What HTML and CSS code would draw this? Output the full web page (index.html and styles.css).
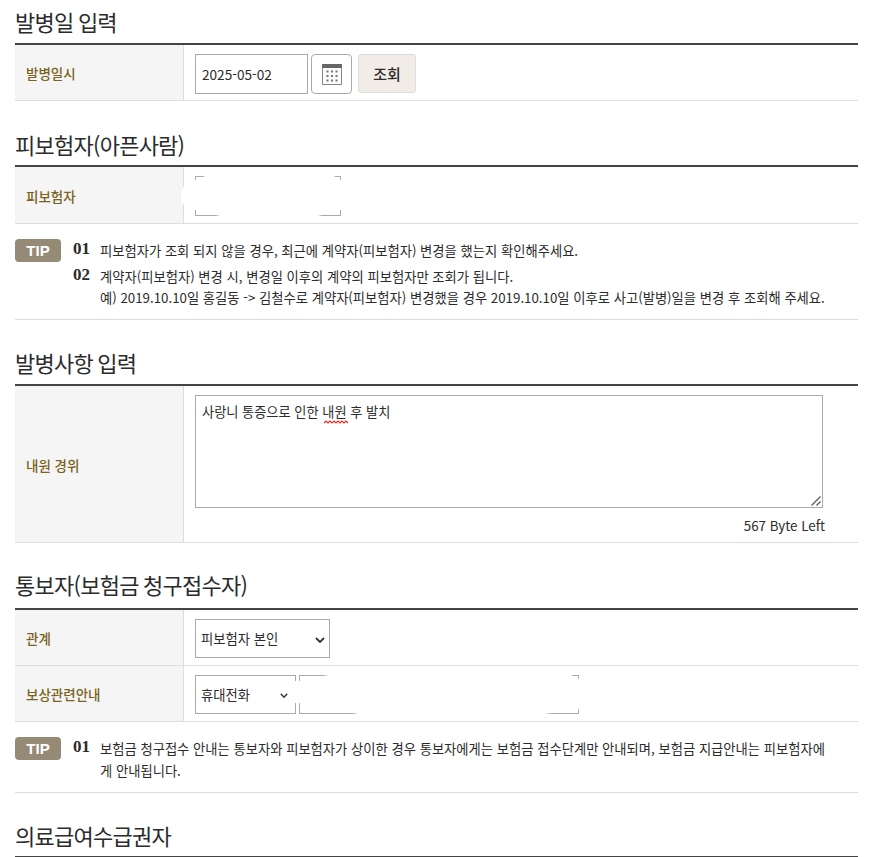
FILE: index.html
```html
<!DOCTYPE html>
<html lang="ko">
<head>
<meta charset="utf-8">
<title>발병일 입력</title>
<link rel="stylesheet" href="styles.css">
</head>
<body>
<main class="page">
  <section class="block">
    <h2 class="title title-a">발병일 입력</h2>
    <div class="table">
      <div class="row row-date">
        <div class="label">발병일시</div>
        <div class="cell cell-top">
          <input class="field field-date" type="text" value="2025-05-02">
          <button class="cal" type="button" aria-label="달력">
            <svg width="20" height="21" viewBox="0 0 20 21">
              <rect x="0.5" y="0.5" width="19" height="20" fill="#fbfbfb" stroke="#888" stroke-width="1"/>
              <rect x="0" y="0" width="20" height="4" fill="#666"/>
              <g fill="#777">
                <rect x="4.5" y="6.5" width="2" height="2"/><rect x="9" y="6.5" width="2" height="2"/><rect x="13.5" y="6.5" width="2" height="2"/>
                <rect x="4.5" y="11" width="2" height="2"/><rect x="9" y="11" width="2" height="2"/><rect x="13.5" y="11" width="2" height="2"/>
                <rect x="4.5" y="15.5" width="2" height="2"/><rect x="9" y="15.5" width="2" height="2"/><rect x="13.5" y="15.5" width="2" height="2"/>
              </g>
            </svg>
          </button>
          <button class="search" type="button">조회</button>
        </div>
      </div>
    </div>
  </section>

  <section class="block">
    <h2 class="title title-b">피보험자(아픈사람)</h2>
    <div class="table">
      <div class="row row-insured">
        <div class="label">피보험자</div>
        <div class="cell cell-top">
          <span class="redact-wrap">
            <input class="field field-name" type="text">
            <span class="mask mask-name"></span>
          </span>
        </div>
      </div>
    </div>
    <div class="tip tip-first">
      <span class="badge">TIP</span>
      <ol class="tips">
        <li><b class="num">01</b><p>피보험자가 조회 되지 않을 경우, 최근에 계약자(피보험자) 변경을 했는지 확인해주세요.</p></li>
        <li><b class="num">02</b><p>계약자(피보험자) 변경 시, 변경일 이후의 계약의 피보험자만 조회가 됩니다.<br>예) 2019.10.10일 홍길동 -&gt; 김철수로 계약자(피보험자) 변경했을 경우 2019.10.10일 이후로 사고(발병)일을 변경 후 조회해 주세요.</p></li>
      </ol>
    </div>
  </section>

  <section class="block">
    <h2 class="title">발병사항 입력</h2>
    <div class="table">
      <div class="row row-text">
        <div class="label">내원 경위</div>
        <div class="cell cell-col">
          <span class="text-wrap">
            <textarea class="area" spellcheck="false">사랑니 통증으로 인한 내원 후 발치</textarea>
            <svg class="squiggle" width="24" height="4" viewBox="0 0 24 4"><path d="M0 3 L2 1 L4 3 L6 1 L8 3 L10 1 L12 3 L14 1 L16 3 L18 1 L20 3 L22 1 L24 3" fill="none" stroke="#e8261f" stroke-width="1.2"/></svg>
            <svg class="grip" width="10" height="10" viewBox="0 0 10 10"><path d="M0.5 9.5L9.5 0.5M5.5 9.5L9.5 5.5" fill="none" stroke="#555" stroke-width="1.2"/></svg>
          </span>
          <span class="bytes">567 Byte Left</span>
        </div>
      </div>
    </div>
  </section>

  <section class="block">
    <h2 class="title title-d">통보자(보험금 청구접수자)</h2>
    <div class="table">
      <div class="row row-rel">
        <div class="label">관계</div>
        <div class="cell cell-top">
          <select class="sel sel-rel"><option>피보험자 본인</option></select>
        </div>
      </div>
      <div class="row row-rel">
        <div class="label">보상관련안내</div>
        <div class="cell cell-top cell-phone">
          <select class="sel sel-phone"><option>휴대전화</option></select>
          <span class="redact-wrap">
            <input class="field field-phone" type="text">
            <span class="mask mask-phone"></span>
          </span>
        </div>
      </div>
    </div>
    <div class="tip tip-second">
      <span class="badge">TIP</span>
      <ol class="tips">
        <li><b class="num">01</b><p>보험금 청구접수 안내는 통보자와 피보험자가 상이한 경우 통보자에게는 보험금 접수단계만 안내되며, 보험금 지급안내는 피보험자에게 안내됩니다.</p></li>
      </ol>
    </div>
  </section>

  <section class="block">
    <h2 class="title title-e">의료급여수급권자</h2>
    <div class="table table-last"></div>
  </section>
</main>
</body>
</html>
```
FILE: styles.css
```css
* { box-sizing: border-box; }
html, body { margin: 0; padding: 0; background: #fff; }
body {
  font-family: "Noto Sans CJK KR", "Noto Sans", sans-serif;
  color: #2b2b2b;
  height: 857px;
  overflow: hidden;
}
.page { width: 843px; margin-left: 15px; }
.title {
  margin: 0;
  height: 64px;
  padding-top: 26px;
  font-size: 22px;
  line-height: 32px;
  font-weight: 400;
  letter-spacing: -0.75px;
  word-spacing: -1px;
  color: #2b2b2b;
  white-space: nowrap;
}
.title-a { height: 43px; padding-top: 5px; }
.title-b { padding-top: 27px; }
.title-d { height: 65px; padding-top: 25px; }
.title-e { height: 63px; }
.table { border-top: 2px solid #444; }
.table-last { border-top-width: 1px; }
.row {
  display: grid;
  grid-template-columns: 169px 1fr;
  border-bottom: 1px solid #ddd;
}
.row-date { height: 56px; }
.row-insured { height: 57px; }
.row-text { height: 157px; }
.row-rel { height: 56px; }
.label {
  display: flex;
  align-items: center;
  padding-left: 11px;
  padding-top: 1px;
  background: #f5f5f5;
  border-right: 1px solid #ddd;
  font-size: 13.5px;
  font-weight: 500;
  color: #7a6220;
}
.cell { padding-left: 11px; }
.cell-top { display: flex; align-items: flex-start; padding-top: 9px; }
.cell-col { display: flex; flex-direction: column; padding-top: 9px; }
.field {
  display: block;
  height: 40px;
  border: 1px solid #aaa;
  border-radius: 0;
  background: #fff;
  font: 13.6px "Noto Sans CJK KR", sans-serif;
  color: #2b2b2b;
  padding: 0 6px;
}
.field-date { width: 113px; }
.field-name { width: 146px; }
.field-phone { width: 280px; height: 39px; }
.cal {
  width: 41px;
  height: 40px;
  margin-left: 3px;
  padding: 0;
  display: flex;
  align-items: center;
  justify-content: center;
  background: #fff;
  border: 1px solid #aaa;
  border-radius: 4px;
}
.search {
  width: 58px;
  height: 39px;
  margin-left: 6px;
  padding: 0;
  background: #f1ede6;
  border: 1px solid #ddd;
  border-radius: 3px;
  font: 500 15px "Noto Sans CJK KR", sans-serif;
  color: #2b2b2b;
}
.redact-wrap { position: relative; display: block; }
.mask { position: absolute; background: #fff; }
.mask-name {
  left: -14px;
  top: -1px;
  width: 162px;
  height: 42px;
  clip-path: polygon(27px 0, 151px 0, 160px 5px, 160px 35px, 137px 41px, 39px 41px, 14px 35px, 3px 30px, 0 25px, 0 16px, 3px 11px, 14px 5px);
}
.mask-phone {
  left: -6px;
  top: -1px;
  width: 290px;
  height: 41px;
  clip-path: polygon(40px 0, 276px 0, 288px 6px, 288px 35px, 251px 40px, 65px 40px, 6px 29px, 0 29px, 0 7px, 6px 7px);
}
.text-wrap { position: relative; display: block; width: 628px; height: 113px; }
.area {
  display: block;
  width: 628px;
  height: 113px;
  border: 1px solid #aaa;
  padding: 6px;
  margin: 0;
  font: 13.2px/20px "Noto Sans CJK KR", sans-serif;
  color: #2b2b2b;
  background: #fff;
  border-radius: 0;
  resize: none;
}
.squiggle { position: absolute; left: 129px; top: 25px; }
.grip { position: absolute; right: 2px; bottom: 2px; pointer-events: none; }
.bytes {
  margin-top: 8px;
  width: 630px;
  text-align: right;
  font-size: 13.33px;
  line-height: 20px;
  color: #2b2b2b;
}
.sel {
  display: block;
  height: 39px;
  border: 1px solid #aaa;
  border-radius: 0;
  font: 13.33px "Noto Sans CJK KR", sans-serif;
  color: #2b2b2b;
  padding-left: 5px;
  appearance: none;
  background-color: #fff;
  background-repeat: no-repeat;
  background-image: url("data:image/svg+xml,%3Csvg xmlns='http://www.w3.org/2000/svg' width='10' height='6'%3E%3Cpath d='M1 1l4 4 4-4' fill='none' stroke='%23333' stroke-width='1.8'/%3E%3C/svg%3E");
}
.sel-rel { width: 135px; background-position: 119px 17px; }
.sel-phone { width: 101px; background-position: 84px 17px; background-size: 8px 5px; }
.cell-phone { gap: 3px; }
.tip {
  display: flex;
  align-items: flex-start;
  border-bottom: 1px solid #ddd;
}
.tip-first { height: 96px; padding-top: 15px; }
.tip-second { height: 71px; padding-top: 15px; }
.badge {
  flex: none;
  width: 46px;
  height: 23px;
  border-radius: 4px;
  background: #958a75;
  color: #fff;
  text-align: center;
  font: 700 15px/23px "Liberation Sans", Arial, sans-serif;
}
.tips { list-style: none; margin: 0 0 0 12px; padding: 1px 0 0; flex: 1; }
.tips li { display: flex; margin-bottom: 4px; }
.num {
  flex: none;
  width: 27px;
  font: 700 17px/17px "Liberation Serif", serif;
  color: #2b2b2b;
}
.tips p {
  margin: 0;
  width: 728px;
  font-size: 13.3px;
  line-height: 21.5px;
  color: #2b2b2b;
  word-break: break-all;
}
```
